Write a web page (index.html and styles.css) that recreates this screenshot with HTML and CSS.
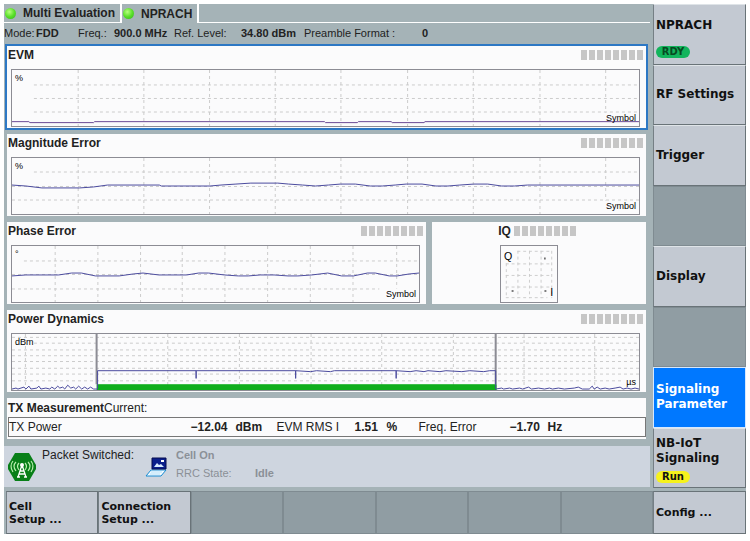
FILE: index.html
```
<!DOCTYPE html>
<html lang="en">
<head>
    <meta charset="UTF-8">
    <meta name="viewport" content="width=device-width, initial-scale=1.0">
    <title>NPRACH Measurement</title>
    <link rel="stylesheet" href="styles.css">
</head>
<body>
    <div class="device">
        <main class="screen">
            <nav class="tabs">
                <button class="tab"><span class="led"></span>Multi Evaluation</button>
                <button class="tab active"><span class="led"></span>NPRACH</button>
            </nav>
            <div class="info">
                <span>Mode:</span><b>FDD</b>
                <span>Freq.:</span><b>900.0 MHz</b>
                <span>Ref. Level:</span><b>34.80 dBm</b>
                <span>Preamble Format :</span><b>0</b>
            </div>

            <div class="panels">
                <section class="panel focused">
                    <header><h2>EVM</h2><span class="meter"></span></header>
                    <div class="plot">
                        <svg viewBox="0 0 630 58" preserveAspectRatio="none">
                            <path class="grid" d="M22 15.500H630M22 29.500H630M22 43.500H630M66.500 0V58M132.500 0V58M198.500 0V58M264.500 0V58M330.500 0V58M397.500 0V58M463.500 0V58M530.500 0V58M596.500 0V44"/>
                            <path class="trace violet" d="M0 53.500H17L18 54.500H82L83 53.500H314L315 54.500H347L348 53.500H381L382 54.500H414L415 53.500H630"/>
                        </svg>
                        <span class="unit">%</span><span class="axis">Symbol</span>
                    </div>
                </section>

                <section class="panel">
                    <header><h2>Magnitude Error</h2><span class="meter"></span></header>
                    <div class="plot">
                        <svg viewBox="0 0 630 58" preserveAspectRatio="none">
                            <path class="grid" d="M22 14.500H630M0 29.500H630M0 43.500H630M66.500 0V58M132.500 0V58M198.500 0V58M264.500 0V58M330.500 0V58M397.500 0V58M463.500 0V58M530.500 0V58M596.500 0V44"/>
                            <path class="trace" d="M0 28L14 29L30 31H68L82 30L96 28H148L150 29H199L210 28L225 27L240 26H267L278 27L292 28L305 29L318 28L330 27H345L360 29H372L385 28L396 27H412L426 29H438L450 28L464 27H478L492 29H505L518 28H630"/>
                        </svg>
                        <span class="unit">%</span><span class="axis">Symbol</span>
                    </div>
                </section>

                <div class="split">
                    <section class="panel">
                        <header><h2>Phase Error</h2><span class="meter"></span></header>
                        <div class="plot">
                            <svg viewBox="0 0 410 58" preserveAspectRatio="none">
                                <path class="grid" d="M12 15.500H410M0 29.500H410M0 44.500H370M43.500 0V58M86.500 0V58M129.500 0V58M171.500 0V58M214.500 0V58M257.500 0V58M300.500 0V58M343.500 0V58M387.500 0V44"/>
                                <path class="trace" d="M0 31L14 30H47L60 28H70L84 31H108L122 29L132 28L148 30H176L188 28H198L214 30L228 31H238L250 30H264L278 31H288L302 30L318 28L332 31H344L358 28H366L380 31H388L400 29L410 28"/>
                            </svg>
                            <span class="unit">°</span><span class="axis">Symbol</span>
                        </div>
                    </section>
                    <section class="panel iq">
                        <div class="iq-body">
                            <header><h2>IQ</h2><span class="meter"></span></header>
                            <svg class="iq-plot" viewBox="0 0 58 58">
                                <path class="grid" d="M17 5.500H52M5 18.500H52M5 30.500H52M5 42.500H52M5 53.500H48M5.500 18V54M17.500 5V54M29.500 5V54M41.500 5V54M52.500 5V54"/>
                                <path class="dots" d="M45 12h1v2h-1zM11 46h2v1h-2zM45 46h2v1h-2z"/>
                                <text x="3" y="15">Q</text><text x="51" y="52">I</text>
                            </svg>
                        </div>
                    </section>
                </div>

                <section class="panel">
                    <header><h2>Power Dynamics</h2><span class="meter"></span></header>
                    <div class="plot">
                        <svg viewBox="0 0 630 58" preserveAspectRatio="none">
                            <path class="grid" d="M0 3.500H630M22 9.500H630M0 16.500H630M0 22.500H630M0 28.500H630M0 35.500H630M0 41.500H630M0 48.500H612M13.500 0V58M156.500 0V58M228.500 0V58M300.500 0V58M371.500 0V58M443.500 0V58M514.500 0V58M585.500 0V58"/>
                            <rect class="band" x="85" y="52" width="402" height="6"/>
                            <path class="limit" d="M85 0V52M486 0V52"/>
                            <path class="trace" d="M0 57L4 56L6 57L12 55L14 57L17 54L19 57L25 56L27 54L29 57L34 56L38 57L40 55L43 57L46 54L48 56L51 55L53 57L56 53L59 56L62 55L64 57L67 54L70 57L73 55L76 57L79 55L82 57H86V38H185V46V38H285V46V38L300 39L306 38L320 39L324 38H386V46V38L400 39L406 38L414 39L418 38L430 39L436 38L452 39L460 38L474 39L480 38H486V57L492 56L494 57L500 56L503 57L510 56L513 57L519 55L522 57L529 56L535 57L540 56L543 57L549 56L555 57L565 56L569 55L573 57L580 57L583 54L585 57L588 55L591 57L596 56L600 57L606 56L611 55L614 57L618 56L622 57L626 56L630 57"/>
                        </svg>
                        <span class="unit">dBm</span><span class="axis">µs</span>
                    </div>
                </section>

                <section class="panel tx">
                    <header><h2>TX Measurement</h2><span>Current:</span></header>
                    <table>
                        <tr>
                            <th>TX Power</th><td class="power">−12.04</td><td class="dbm">dBm</td>
                            <th class="rms">EVM RMS I</th><td>1.51</td><td>%</td>
                            <th class="freq">Freq. Error</th><td>−1.70</td><td>Hz</td>
                        </tr>
                    </table>
                </section>
            </div>

            <footer class="status">
                <svg class="antenna" viewBox="0 0 30 30">
                    <path d="M8 1H22L29 13V17L22 29H8L1 17V13Z" fill="#087f18"/>
                    <g fill="none" stroke="#b9efae" stroke-width="1.200">
                        <path d="M12 11Q9 14 12 18M9 10Q5 14 9 19M6 9Q2 14 6 20M18 11Q21 14 18 18M21 10Q25 14 21 19M24 9Q28 14 24 20"/>
                    </g>
                    <path d="M15 13L11 25M15 13L19 25M13 19H17M12 22H18M10 25H13M17 25H20" fill="none" stroke="#fff" stroke-width="1.300"/>
                    <circle cx="15" cy="13" r="2" fill="#fff"/>
                </svg>
                <span class="switched">Packet Switched:</span>
                <svg class="laptop" viewBox="0 0 22 20">
                    <path d="M6 13L1 19H16L21 13Z" fill="#f4fbff" stroke="#168bd2"/>
                    <path d="M7 1H21V12H7Z" fill="#0b1f8c" stroke="#060d4f"/>
                    <path d="M9 10L12 6L14 8L16 7L19 10Z" fill="#d8ecff"/>
                    <rect x="16" y="3" width="3" height="2" fill="#fff"/>
                    <path d="M6 15H17M5 17H15" stroke="#b4e0f8"/>
                </svg>
                <div class="cell">
                    <b>Cell On</b>
                    <span>RRC State:</span><b>Idle</b>
                </div>
            </footer>
        </main>

        <aside class="softkeys">
            <button class="key">NPRACH<span class="badge ready">RDY</span></button>
            <button class="key">RF Settings</button>
            <button class="key">Trigger</button>
            <button class="key" disabled aria-label="Empty"></button>
            <button class="key">Display</button>
            <button class="key" disabled aria-label="Empty"></button>
            <button class="key selected">Signaling<br>Parameter</button>
            <button class="key">NB-IoT<br>Signaling<span class="badge run">Run</span></button>
        </aside>

        <div class="hotkeys">
            <button class="key">Cell<br>Setup ...</button>
            <button class="key">Connection<br>Setup ...</button>
            <button class="key" disabled aria-label="Empty"></button>
            <button class="key" disabled aria-label="Empty"></button>
            <button class="key" disabled aria-label="Empty"></button>
            <button class="key" disabled aria-label="Empty"></button>
            <button class="key" disabled aria-label="Empty"></button>
        </div>
        <button class="key config">Config ...</button>
    </div>
</body>
</html>
```
FILE: styles.css
```
* {
    box-sizing: border-box;
}
body {
    margin: 4px;
    background-color: #fff;
    color: #222;
    font-family: "Liberation Sans", Arial, sans-serif;
    font-size: 12px;
}
button {
    margin: 0;
    font-family: inherit;
    color: inherit;
}
svg {
    display: block;
}
.device {
    display: grid;
    grid-template-columns: 1fr 93px;
    column-gap: 3px;
    row-gap: 3px;
    background-color: #a5b3b7;
}
.screen {
    min-width: 0;
}

/* tabs and settings line */
.tabs {
    display: flex;
    height: 19px;
    border-bottom: 1px solid #fff;
}
.tab {
    display: flex;
    align-items: center;
    gap: 7px;
    padding: 0 5px 0 1px;
    border: 0;
    border-right: 2px solid #fff;
    background-color: #a5b3b7;
    font-size: 12px;
    font-weight: bold;
}
.tab.active {
    margin-bottom: -1px;
}
.led {
    width: 11px;
    height: 11px;
    border-radius: 50%;
    background: radial-gradient(circle at 40% 35%, #b8ff80, #5be02a 50%, #2fb416);
}
.info {
    display: grid;
    grid-template-columns: 32px 42px 36px 60px 67px 63px 118px 1fr;
    line-height: 20px;
    height: 21px;
    font-size: 11px;
    white-space: nowrap;
}

/* measurement panels */
.panels {
    display: flex;
    flex-direction: column;
    gap: 2px;
    padding: 0 2px 0 1px;
}
.panel {
    border: 2px solid transparent;
    padding: 0 6px 1px 4px;
    background-color: #fbfbfc;
    background-clip: padding-box;
    min-width: 0;
}
.panel.focused {
    border-color: #2d78c4;
}
.panel header {
    display: flex;
    align-items: center;
    justify-content: space-between;
    height: 18px;
    margin: 0 -5px 5px -3px;
}
.panel h2 {
    margin: 0;
    font-size: 12px;
    font-weight: bold;
}
.meter {
    width: 64px;
    height: 10px;
    background: repeating-linear-gradient(90deg, #c6c6c6 0 6px, transparent 6px 8px);
}
.plot {
    position: relative;
    height: 58px;
    border: 1px solid #8c8c94;
}
.plot svg {
    width: 100%;
    height: 100%;
}
.plot path {
    fill: none;
    vector-effect: non-scaling-stroke;
}
.grid {
    fill: none;
    stroke: #ccc;
    stroke-dasharray: 3 3;
}
.trace {
    stroke: #4b4b9e;
}
.trace.violet {
    stroke: #6a4a94;
}
.limit {
    stroke: #8c8c94;
    stroke-width: 2px;
}
.band {
    fill: #10ae1c;
}
.unit, .axis {
    position: absolute;
    font-size: 9px;
    line-height: 10px;
    color: #000;
}
.unit {
    top: 3px;
    left: 3px;
}
.axis {
    right: 3px;
    bottom: 3px;
}
.split {
    display: grid;
    grid-template-columns: 423fr 218fr;
    gap: 2px;
}
.iq {
    display: flex;
    justify-content: center;
}
.iq header {
    gap: 3px;
    margin: 0 0 5px;
}
.iq-plot {
    width: 58px;
    height: 58px;
    margin-left: 2px;
    border: 1px solid #8c8c94;
}
.iq-plot text {
    font-size: 11px;
}

/* TX results */
.panel.tx {
    padding: 0 0 2px 1px;
}
.tx header {
    justify-content: flex-start;
    height: 19px;
    margin: 0;
}
.tx table {
    width: 100%;
    border: 1px solid #777;
    border-collapse: collapse;
    table-layout: fixed;
    line-height: 18px;
}
.tx th, .tx td {
    padding: 0;
    white-space: nowrap;
}
.tx th {
    width: 78px;
    font-weight: normal;
    text-align: left;
}
.tx td {
    width: 32px;
    font-weight: bold;
}
.tx th.freq {
    width: 91px;
}
.tx td.power {
    width: 45px;
}
.tx td.dbm {
    width: 41px;
}
.tx th:first-child {
    width: 182px;
}
.tx td:last-child {
    width: auto;
}
.tx td:nth-last-child(2) {
    width: 38px;
}

/* connection state */
.status {
    display: flex;
    align-items: center;
    height: 41px;
    margin: 5px 0 1px;
    padding-left: 3px;
    background-color: #ced5df;
}
.antenna {
    width: 30px;
    height: 30px;
}
.switched {
    align-self: flex-start;
    padding: 2px 0 0 5px;
    width: 108px;
}
.laptop {
    width: 22px;
    height: 20px;
}
.cell {
    display: grid;
    grid-template-columns: 79px auto;
    align-self: flex-start;
    margin-left: 9px;
    font-size: 11px;
    line-height: 18px;
    color: #8b9097;
}
.cell b:first-child {
    grid-column: 1 / 3;
}

/* softkeys */
.softkeys {
    display: grid;
    grid-auto-rows: 1fr;
}
.key {
    display: flex;
    flex-direction: column;
    align-items: flex-start;
    justify-content: center;
    min-width: 0;
    padding: 0 2px;
    border: 1px solid #697378;
    border-top-color: #dfe4e8;
    border-left-color: #757f85;
    background-color: #c3c9d2;
    color: #111;
    font-family: "DejaVu Sans", Verdana, sans-serif;
    font-size: 12px;
    font-weight: bold;
    line-height: 15px;
    text-align: left;
}
.key:disabled {
    border-color: #7f8b91;
    background-color: #909da3;
}
.key.selected {
    border-color: #d5e8ff;
    background-color: #0078ff;
    color: #fff;
}
.key:has(.badge) {
    justify-content: flex-end;
    gap: 5px;
    padding-bottom: 4px;
}
.key:first-child:has(.badge) {
    gap: 13px;
    padding-bottom: 6px;
}
.badge {
    width: 34px;
    border-radius: 6px;
    font-size: 10px;
    line-height: 12px;
    text-align: center;
}
.badge.ready {
    background-color: #12b45c;
    color: #064a22;
}
.badge.run {
    background-color: #f6f21c;
}
.hotkeys {
    display: grid;
    grid-template-columns: repeat(7, 1fr);
    height: 43px;
    margin: 0 -3px 0 2px;
}
.hotkeys .key, .config {
    border-top-color: #697378;
    font-size: 11px;
    line-height: 13px;
}
.hotkeys .key:disabled {
    border-color: #7f8b91;
}
```
